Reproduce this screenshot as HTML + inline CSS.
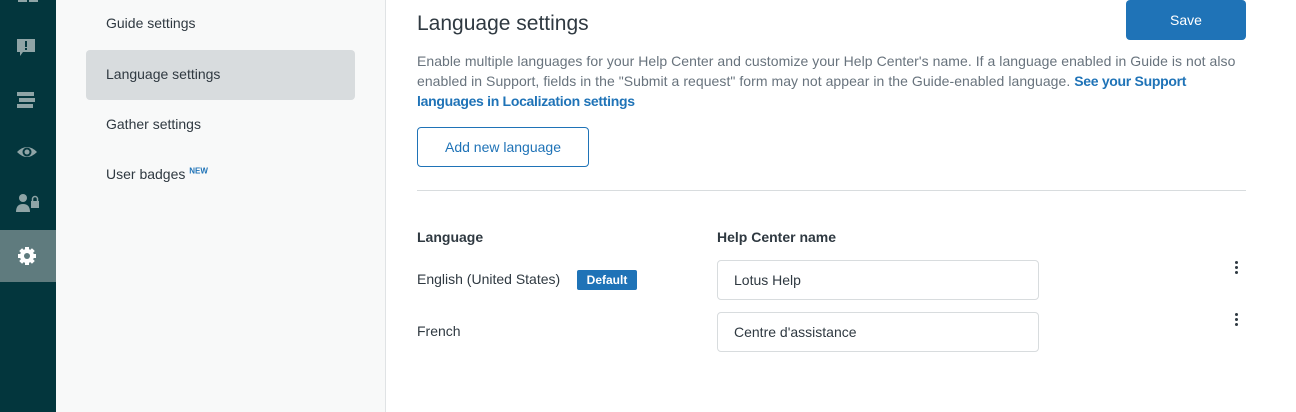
<!DOCTYPE html>
<html><head><style>
*{margin:0;padding:0;box-sizing:border-box}
body{width:1296px;height:412px;overflow:hidden;background:#fff;font-family:"Liberation Sans",sans-serif;color:#2f3941;position:relative}
.side{position:absolute;left:0;top:0;width:56px;height:412px;background:#03363d}
.act{position:absolute;left:0;top:230px;width:56px;height:52px;background:#5f7b7e}
.nav{position:absolute;left:56px;top:0;width:330px;height:412px;background:#f8f9f9;border-right:1px solid #e0e3e5}
.ni{position:absolute;left:50px;font-size:14px;color:#2f3941}
.nsel{position:absolute;left:30px;top:50px;width:269px;height:50px;background:#d8dcde;border-radius:4px}
.abs{position:absolute}
h1{position:absolute;left:417px;top:12px;font-size:21px;font-weight:normal;color:#2f3941}
.save{position:absolute;left:1126px;top:0;width:120px;height:40px;background:#1f73b7;color:#fff;border-radius:4px;font-size:14px;text-align:center;line-height:40px}
.desc{position:absolute;left:417px;top:51px;width:832px;font-size:14px;line-height:20px;color:#68737d;letter-spacing:0.05px}
.desc a{color:#1f73b7;font-weight:bold;text-decoration:none;letter-spacing:-0.3px}
.add{position:absolute;left:417px;top:127px;width:172px;height:40px;border:1px solid #1f73b7;border-radius:4px;color:#1f73b7;font-size:14px;text-align:center;line-height:38px}
.hr{position:absolute;left:417px;top:190px;width:829px;height:1px;background:#d8dcde}
.th{position:absolute;top:229px;font-size:14px;font-weight:bold}
.td{position:absolute;font-size:14px}
.inp{position:absolute;left:717px;width:322px;height:40px;border:1px solid #d8dcde;border-radius:4px;padding-left:16px;line-height:38px;font-size:14px}
.badge{position:absolute;left:577px;top:270px;width:60px;height:20px;background:#1f73b7;color:#fff;font-size:12px;font-weight:bold;text-align:center;line-height:20px;border-radius:2px}
.dots{position:absolute;left:1235px;width:4px}
.dots i{display:block;width:3px;height:3px;background:#2f3941;border-radius:50%;margin-bottom:2px}
</style></head><body>
<div class="side">
<svg class="abs" style="left:16px;top:-6px" width="24" height="12"><path d="M2 0h9v8H2zM13 0h9v8h-9z" fill="#8fa4a6"/></svg>
<svg class="abs" style="left:17px;top:38px" width="20" height="20"><path d="M0 1h18v13H6l-3 4v-4H0z" fill="#8fa4a6"/><rect x="8" y="3" width="2" height="6" fill="#03363d"/><rect x="8" y="10" width="2" height="2" fill="#03363d"/></svg>
<svg class="abs" style="left:17px;top:91px" width="20" height="20"><rect y="1" width="17" height="4" fill="#8fa4a6"/><rect x="2" y="7" width="16" height="4" fill="#8fa4a6"/><rect y="13" width="16" height="4" fill="#8fa4a6"/></svg>
<svg class="abs" style="left:16px;top:142px" width="22" height="20"><path d="M1 10Q11 0 21 10Q11 20 1 10z" fill="#8fa4a6"/><circle cx="11" cy="10" r="4.5" fill="#03363d"/><circle cx="11" cy="10" r="2.5" fill="#8fa4a6"/></svg>
<svg class="abs" style="left:16px;top:193px" width="24" height="20"><circle cx="7" cy="5" r="4" fill="#8fa4a6"/><path d="M0 19q0-8 7-8q7 0 7 8z" fill="#8fa4a6"/><rect x="15" y="8" width="8" height="7" fill="#8fa4a6"/><path d="M16.5 8v-2a2.5 2.5 0 015 0v2" stroke="#8fa4a6" stroke-width="1.5" fill="none"/></svg>
<div class="act"></div>
<svg class="abs" style="left:17px;top:246px" width="20" height="20" viewBox="0 0 20 20"><g fill="#fff"><circle cx="10" cy="10" r="7"/><rect x="8" y="1" width="4" height="18"/><rect x="1" y="8" width="18" height="4"/><rect x="8" y="1" width="4" height="18" transform="rotate(45 10 10)"/><rect x="8" y="1" width="4" height="18" transform="rotate(-45 10 10)"/></g><circle cx="10" cy="10" r="3" fill="#5f7b7e"/></svg>
</div>
<div class="nav">
<div class="nsel"></div>
<div class="ni" style="top:15px">Guide settings</div>
<div class="ni" style="top:66px">Language settings</div>
<div class="ni" style="top:116px">Gather settings</div>
<div class="ni" style="top:166px">User badges <sup style="font-size:8px;font-weight:bold;color:#1f73b7">NEW</sup></div>
</div>
<h1>Language settings</h1>
<div class="save">Save</div>
<div class="desc">Enable multiple languages for your Help Center and customize your Help Center's name. If a language enabled in Guide is not also enabled in Support, fields in the "Submit a request" form may not appear in the Guide-enabled language. <a>See your Support<br>languages in Localization settings</a></div>
<div class="add">Add new language</div>
<div class="hr"></div>
<div class="th" style="left:417px">Language</div>
<div class="th" style="left:717px">Help Center name</div>
<div class="td" style="left:417px;top:271px">English (United States)</div>
<div class="badge">Default</div>
<div class="inp" style="top:260px">Lotus Help</div>
<div class="dots" style="top:261px"><i></i><i></i><i></i></div>
<div class="td" style="left:417px;top:323px">French</div>
<div class="inp" style="top:312px">Centre d'assistance</div>
<div class="dots" style="top:313px"><i></i><i></i><i></i></div>
</body></html>
